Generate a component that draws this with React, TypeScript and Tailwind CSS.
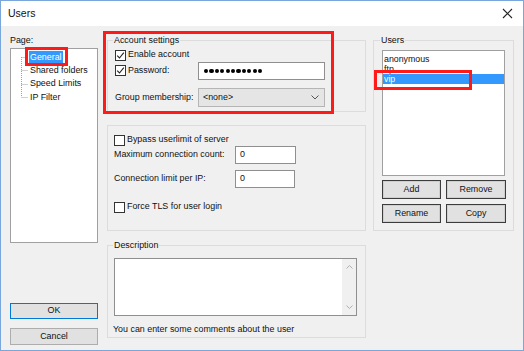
import React from 'react';

const font = "font-['Liberation_Sans',Arial,sans-serif]";

function Check({ checked }: { checked?: boolean }) {
  return (
    <div className="w-[11px] h-[11px] border border-[#333] bg-white flex items-center justify-center shrink-0">
      {checked && (
        <svg width="9" height="9" viewBox="0 0 9 9">
          <path d="M1.2 4.6 L3.5 7 L7.8 1.6" fill="none" stroke="#222" strokeWidth="1.1" />
        </svg>
      )}
    </div>
  );
}

function GroupLabel({ children }: { children: React.ReactNode }) {
  return (
    <div className="-mt-[7px] ml-[5px] px-px w-fit bg-[#f0f0f0] leading-[12px] h-[12px]">{children}</div>
  );
}

function UserButton({ label }: { label: string }) {
  return (
    <div className="h-[19px] border border-[#3c3c3c] bg-[#e1e1e1] shadow-[inset_0_0_0_1px_#cfcfcf] flex items-center justify-center">
      {label}
    </div>
  );
}

export default function App() {
  const pages = ['General', 'Shared folders', 'Speed Limits', 'IP Filter'];
  const users = ['anonymous', 'ftp', 'vip'];

  return (
    <div className={`w-[524px] h-[351px] bg-[#79a7dc] p-px text-[8.9px] text-[#111] ${font}`}>
      <div className="w-full h-full flex flex-col relative">
        {/* Title bar */}
        <div className="h-[25px] bg-white flex items-center justify-between pl-[7px] pr-[10px]">
          <span className="text-[10.5px]">Users</span>
          <svg width="11" height="11" viewBox="0 0 11 11">
            <path d="M1 1 L10 10 M10 1 L1 10" stroke="#222" strokeWidth="1.1" />
          </svg>
        </div>

        {/* Body */}
        <div className="flex-1 bg-[#f0f0f0] flex pl-[9px]">
          {/* Left column */}
          <div className="w-[88px] flex flex-col">
            <div className="mt-[8px] h-[12px] leading-[12px]">Page:</div>
            <div className="mt-[2px] h-[195px] border border-[#a0a0a0] bg-white flex">
              <svg width="18" height="60" viewBox="0 0 18 60" className="shrink-0">
                <g stroke="#a0a0a0" strokeWidth="1" strokeDasharray="1 1" fill="none">
                  <path d="M10.5 8 V48" />
                  <path d="M10.5 8.5 H17" />
                  <path d="M10.5 21.5 H17" />
                  <path d="M10.5 35.5 H17" />
                  <path d="M10.5 48.5 H17" />
                </g>
              </svg>
              <div className="flex flex-col pt-px">
                {pages.map((p, i) => (
                  <div key={p} className="h-[13.3px] flex items-center">
                    <span className={i === 0 ? 'bg-[#3399ff] text-white px-px leading-[12px]' : 'px-px leading-[12px]'}>{p}</span>
                  </div>
                ))}
              </div>
            </div>
            <div className="mt-[60px] h-[16px] border border-[#0078d7] bg-[#e1e1e1] flex items-center justify-center">OK</div>
            <div className="mt-[9px] h-[17px] border border-[#adadad] bg-[#e1e1e1] flex items-center justify-center">Cancel</div>
          </div>

          {/* Middle column */}
          <div className="w-[259px] ml-[9px] flex flex-col">
            <div className="mt-[14px] h-[72px] border border-[#dcdcdc] flex flex-col">
              <GroupLabel>Account settings</GroupLabel>
              <div className="mt-[2px] h-[14px] pl-[7px] flex items-center gap-[2px]">
                <Check checked />
                <span>Enable account</span>
              </div>
              <div className="h-[18px] pl-[7px] flex items-center">
                <div className="w-[83px] flex items-center gap-[2px]">
                  <Check checked />
                  <span>Password:</span>
                </div>
                <div className="w-[127px] h-[18px] border border-[#8f8f8f] bg-white flex items-center gap-[1.1px] pl-[5px]">
                  {Array.from({ length: 11 }).map((_, i) => (
                    <div key={i} className="w-[4.3px] h-[4.3px] rounded-full bg-black" />
                  ))}
                </div>
              </div>
              <div className="mt-[8px] h-[19px] pl-[7px] flex items-center">
                <span className="w-[83px]">Group membership:</span>
                <div className="w-[127px] h-[19px] border border-[#b5b5b5] bg-[#e5e5e5] flex items-center justify-between pl-[4px] pr-[5px]">
                  <span>&lt;none&gt;</span>
                  <svg width="8" height="5" viewBox="0 0 8 5">
                    <path d="M0.5 0.5 L4 4 L7.5 0.5" fill="none" stroke="#555" strokeWidth="1" />
                  </svg>
                </div>
              </div>
            </div>

            <div className="mt-[13px] h-[106px] border border-[#dcdcdc] flex flex-col pl-[6px]">
              <div className="mt-[8px] h-[12px] flex items-center gap-[2px]">
                <Check />
                <span>Bypass userlimit of server</span>
              </div>
              <div className="h-[18px] flex items-center">
                <span className="w-[121px]">Maximum connection count:</span>
                <div className="w-[61px] h-[18px] border border-[#8f8f8f] bg-white pl-[4px] leading-[15px]">0</div>
              </div>
              <div className="mt-[6px] h-[18px] flex items-center">
                <span className="w-[121px]">Connection limit per IP:</span>
                <div className="w-[60px] h-[18px] border border-[#8f8f8f] bg-white pl-[4px] leading-[15px]">0</div>
              </div>
              <div className="mt-[13px] h-[12px] flex items-center gap-[2px]">
                <Check />
                <span>Force TLS for user login</span>
              </div>
            </div>

            <div className="mt-[14px] h-[93px] border border-[#dcdcdc] flex flex-col">
              <GroupLabel>Description</GroupLabel>
              <div className="mt-[7px] ml-[6px] w-[243px] h-[58px] border border-[#8f8f8f] bg-white flex justify-end">
                <div className="w-[14px] h-full bg-[#f0f0f0] flex flex-col items-center justify-between py-[6px]">
                  <svg width="7" height="4" viewBox="0 0 7 4">
                    <path d="M0.5 3.5 L3.5 0.5 L6.5 3.5" fill="none" stroke="#b0b0b0" strokeWidth="1" />
                  </svg>
                  <svg width="7" height="4" viewBox="0 0 7 4">
                    <path d="M0.5 0.5 L3.5 3.5 L6.5 0.5" fill="none" stroke="#b0b0b0" strokeWidth="1" />
                  </svg>
                </div>
              </div>
              <div className="mt-[7px] ml-[5px] h-[12px] leading-[12px]">You can enter some comments about the user</div>
            </div>
          </div>

          {/* Right column */}
          <div className="w-[141px] ml-[7px] flex flex-col">
            <div className="mt-[14px] h-[191px] border border-[#dcdcdc] flex flex-col">
              <div className="-mt-[7px] ml-[6px] px-px w-fit bg-[#f0f0f0] leading-[12px] h-[12px]">Users</div>
              <div className="mt-[4px] ml-[8px] w-[123px] h-[126px] border border-[#a0a0a0] bg-white pt-[3px] text-[8.8px]">
                {users.map((u, i) => (
                  <div key={u} className={i === 2 ? 'h-[10px] leading-[10px] pl-px bg-[#3399ff] text-white' : 'h-[10px] leading-[10px] pl-px'}>
                    {u}
                  </div>
                ))}
              </div>
              <div className="ml-[8px] mt-[4px] grid grid-cols-[59px_60px] gap-x-[5px] gap-y-[5px]">
                <UserButton label="Add" />
                <UserButton label="Remove" />
                <UserButton label="Rename" />
                <UserButton label="Copy" />
              </div>
            </div>
          </div>
        </div>

        {/* Red annotation boxes */}
        <div className="absolute left-[24px] top-[46px] w-[43px] h-[19px] border-[3px] border-[#ff1a1a]" />
        <div className="absolute left-[102px] top-[30px] w-[231px] h-[83px] border-[3px] border-[#ff1a1a]" />
        <div className="absolute left-[373px] top-[69px] w-[98px] h-[20px] border-[3px] border-[#ff1a1a]" />
      </div>
    </div>
  );
}
